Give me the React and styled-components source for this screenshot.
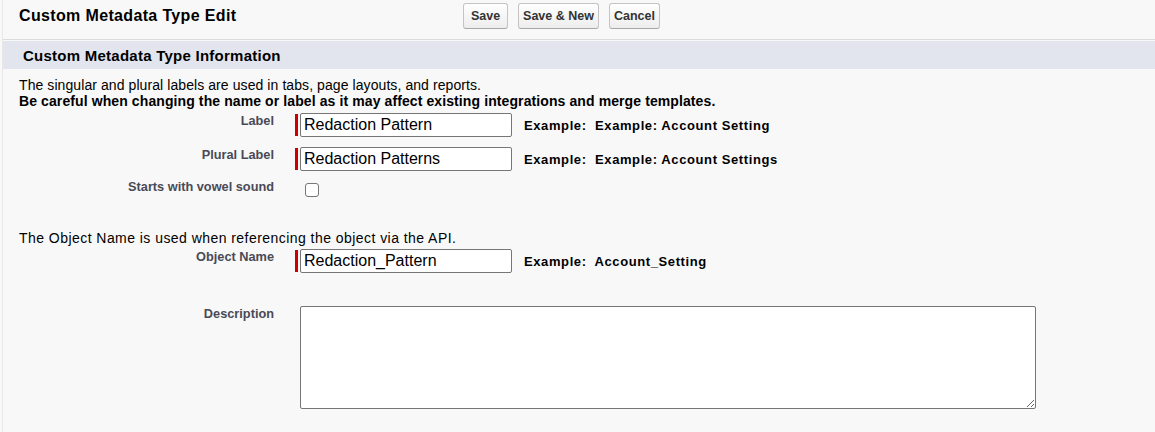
import React from "react";
import styled, { createGlobalStyle } from "styled-components";

const GlobalStyle = createGlobalStyle`
	body {
		margin: 0;
		background: #f8f8f8;
		font-family: "Liberation Sans", Arial, sans-serif;
		color: #000;
	}
`;

const fields = [
	{ label: "Label", value: "Redaction Pattern", example: "Example:  Example: Account Setting", top: 4 },
	{ label: "Plural Label", value: "Redaction Patterns", example: "Example:  Example: Account Settings", top: 10 },
];

const App = () => {
	return (
		<Page>
			<GlobalStyle />
			<Header>
				<Title>Custom Metadata Type Edit</Title>
				<Buttons>
					<Button $w={45}>Save</Button>
					<Button $w={81}>Save &amp; New</Button>
					<Button $w={51}>Cancel</Button>
				</Buttons>
			</Header>
			<SectionHeader>Custom Metadata Type Information</SectionHeader>
			<Body>
				<Note $top={8} $spacing={0.08}>
					The singular and plural labels are used in tabs, page layouts, and reports.
					<Warning>Be careful when changing the name or label as it may affect existing integrations and merge templates.</Warning>
				</Note>

				{fields.map((f) => (
					<Row key={f.label} $top={f.top}>
						<Label>{f.label}</Label>
						<Field>
							<Required />
							<TextInput defaultValue={f.value} />
							<Example>{f.example}</Example>
						</Field>
					</Row>
				))}

				<Row $top={8}>
					<Label>Starts with vowel sound</Label>
					<Field $plain>
						<Checkbox type="checkbox" />
					</Field>
				</Row>

				<Note $top={33} $spacing={0.45}>
					The Object Name is used when referencing the object via the API.
				</Note>

				<Row $top={3}>
					<Label>Object Name</Label>
					<Field>
						<Required />
						<TextInput defaultValue="Redaction_Pattern" />
						<Example>Example:  Account_Setting</Example>
					</Field>
				</Row>

				<Row $top={33}>
					<Label>Description</Label>
					<Field $plain>
						<TextArea />
					</Field>
				</Row>
			</Body>
		</Page>
	);
};

const Page = styled.div`
	margin-left: 2px;
	min-height: 100vh;
	border-left: 1px solid #e8e8e8;
	background: #f8f8f8;
`;

const Header = styled.div`
	display: flex;
	align-items: flex-start;
	box-sizing: border-box;
	height: 40px;
	padding-top: 3px;
	border-bottom: 1px solid #dcdcdc;
	margin-bottom: 1px;
`;

const Title = styled.h2`
	width: 444px;
	margin: 0;
	padding-left: 16px;
	font-size: 16px;
	line-height: 26px;
	letter-spacing: 0.35px;
	font-weight: bold;
	color: #000;
`;

const Buttons = styled.div`
	display: flex;
	gap: 10px;
`;

const Button = styled.button`
	width: ${(p) => p.$w}px;
	height: 26px;
	padding: 0;
	border: 1px solid #c4c4c4;
	border-bottom-color: #a8a8a8;
	border-radius: 3px;
	background: linear-gradient(#ffffff, #ededed);
	font-family: "Liberation Sans", Arial, sans-serif;
	font-size: 12.5px;
	font-weight: bold;
	color: #333;
	cursor: pointer;
`;

const SectionHeader = styled.h3`
	margin: 0;
	height: 28px;
	display: flex;
	align-items: center;
	padding-left: 20px;
	background: #e3e5ee;
	font-size: 15px;
	letter-spacing: 0.25px;
	font-weight: bold;
	color: #000;
`;

const Body = styled.div`
	padding-bottom: 20px;
`;

const Note = styled.div`
	margin-top: ${(p) => p.$top}px;
	padding-left: 16px;
	font-size: 14px;
	line-height: 16px;
	letter-spacing: ${(p) => p.$spacing}px;
`;

const Warning = styled.div`
	font-weight: bold;
	letter-spacing: 0.1px;
`;

const Row = styled.div`
	display: flex;
	align-items: flex-start;
	margin-top: ${(p) => p.$top}px;
`;

const Label = styled.div`
	width: 271px;
	text-align: right;
	font-size: 12.75px;
	line-height: 16px;
	font-weight: bold;
	color: #4a4a56;
`;

const Field = styled.div`
	display: flex;
	align-items: center;
	margin-left: ${(p) => (p.$plain ? 26 : 21)}px;
`;

const Required = styled.span`
	width: 3px;
	height: 22px;
	margin-right: 2px;
	background: #c00;
`;

const TextInput = styled.input`
	box-sizing: border-box;
	width: 212px;
	height: 24px;
	padding: 0 3px;
	border: 1px solid #767676;
	border-radius: 2px;
	background: #fff;
	font-family: "Liberation Sans", Arial, sans-serif;
	font-size: 16px;
	color: #000;
	outline: none;
`;

const Example = styled.span`
	margin-left: 12px;
	font-size: 13px;
	letter-spacing: 0.6px;
	font-weight: bold;
	white-space: pre;
`;

const Checkbox = styled.input`
	appearance: none;
	box-sizing: border-box;
	width: 14px;
	height: 14px;
	margin: 4px 0 0 5px;
	border: 1px solid #767676;
	border-radius: 3px;
	background: #fff;
`;

const TextArea = styled.textarea`
	box-sizing: border-box;
	width: 736px;
	height: 103px;
	margin: 0;
	border: 1px solid #767676;
	border-radius: 2px;
	background: #fff;
	font-family: "Liberation Sans", Arial, sans-serif;
	font-size: 13px;
`;

export default App;
